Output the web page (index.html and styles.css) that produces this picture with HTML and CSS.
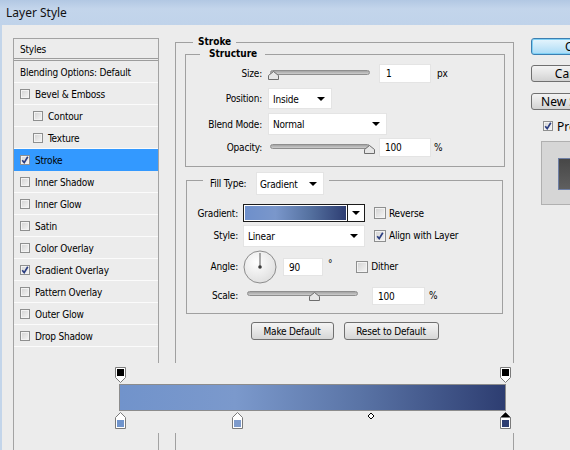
FILE: index.html
```html
<!DOCTYPE html>
<html>
<head>
<meta charset="utf-8">
<title>Layer Style</title>
<link rel="stylesheet" href="styles.css">
</head>
<body>
<div class="win">
  <div class="titlebar">Layer Style</div>
  <div class="client">
    <div class="side">
      <div class="side-head">Styles</div>
      <div class="item">Blending Options: Default</div>
      <div class="item"><span class="cb"></span>Bevel &amp; Emboss</div>
      <div class="item sub"><span class="cb"></span>Contour</div>
      <div class="item sub"><span class="cb"></span>Texture</div>
      <div class="item sel"><span class="cb"><svg viewBox="0 0 8 8" class="tick"><path d="M1.2 4.2 L3.2 6.6 L6.8 0.8"/></svg></span>Stroke</div>
      <div class="item"><span class="cb"></span>Inner Shadow</div>
      <div class="item"><span class="cb"></span>Inner Glow</div>
      <div class="item"><span class="cb"></span>Satin</div>
      <div class="item"><span class="cb"></span>Color Overlay</div>
      <div class="item"><span class="cb"><svg viewBox="0 0 8 8" class="tick"><path d="M1.2 4.2 L3.2 6.6 L6.8 0.8"/></svg></span>Gradient Overlay</div>
      <div class="item"><span class="cb"></span>Pattern Overlay</div>
      <div class="item"><span class="cb"></span>Outer Glow</div>
      <div class="item"><span class="cb"></span>Drop Shadow</div>
    </div>

    <div class="main">
      <fieldset class="grp outer">
        <legend>Stroke</legend>

        <fieldset class="grp struct">
          <legend>Structure</legend>
          <div class="row h23">
            <span class="lbl">Size:</span>
            <span class="slider w100 pad2"><svg class="thumb at-start" viewBox="0 0 11 9"><path d="M5.5 0.5 L10.5 4.5 L10.5 8.5 L0.5 8.5 L0.5 4.5 Z"/></svg></span>
            <span class="field w52 ml9">1</span>
            <span class="unit">px</span>
          </div>
          <div class="row h27">
            <span class="lbl">Position:</span>
            <span class="select w64">Inside<i class="arr"></i></span>
          </div>
          <div class="row h24">
            <span class="lbl">Blend Mode:</span>
            <span class="select w119 tall">Normal<i class="arr"></i></span>
          </div>
          <div class="row h23">
            <span class="lbl">Opacity:</span>
            <span class="slider w100 pad2"><svg class="thumb at-end" viewBox="0 0 11 9"><path d="M5.5 0.5 L10.5 4.5 L10.5 8.5 L0.5 8.5 L0.5 4.5 Z"/></svg></span>
            <span class="field w52 ml9 p5">100</span>
            <span class="unit pct">%</span>
          </div>
        </fieldset>

        <fieldset class="grp fill">
          <legend><span class="fill-lbl">Fill Type:</span><span class="select w68 legend-sel">Gradient<i class="arr"></i></span></legend>
          <div class="row h22">
            <span class="lbl2">Gradient:</span>
            <span class="swatch"><span class="swatch-grad"></span><span class="swatch-btn"><i class="arr"></i></span></span>
            <span class="cb big ml9"></span><span class="cbl">Reverse</span>
          </div>
          <div class="row h23">
            <span class="lbl2">Style:</span>
            <span class="select w122 tall">Linear<i class="arr"></i></span>
            <span class="cb big ml9"><svg viewBox="0 0 8 8" class="tick"><path d="M1.2 4.2 L3.2 6.6 L6.8 0.8"/></svg></span><span class="cbl">Align with Layer</span>
          </div>
          <div class="row h39">
            <span class="lbl2">Angle:</span>
            <svg class="dial" viewBox="0 0 34 34">
              <defs>
                <radialGradient id="dg" cx="0.4" cy="0.35" r="0.7">
                  <stop offset="0" stop-color="#ffffff"/>
                  <stop offset="1" stop-color="#dedede"/>
                </radialGradient>
              </defs>
              <circle cx="17" cy="17" r="16" fill="url(#dg)" stroke="#8c8c8c"/>
              <line x1="17" y1="17" x2="17" y2="3" stroke="#5a5a5a" stroke-width="1"/>
              <circle cx="17" cy="17" r="1.8" fill="#3c3c3c"/>
            </svg>
            <span class="field w40 angle">90</span>
            <span class="deg">°</span>
            <span class="cb big dither"></span><span class="cbl">Dither</span>
          </div>
          <div class="row h19">
            <span class="lbl2">Scale:</span>
            <span class="slider w111 scale"><svg class="thumb at-mid" viewBox="0 0 11 9"><path d="M5.5 0.5 L10.5 4.5 L10.5 8.5 L0.5 8.5 L0.5 4.5 Z"/></svg></span>
            <span class="field w53 ml14 p5 short">100</span>
            <span class="unit pct2">%</span>
          </div>
        </fieldset>

        <div class="btns">
          <span class="btn w83">Make Default</span>
          <span class="btn w95">Reset to Default</span>
        </div>
      </fieldset>
    </div>

    <div class="actions">
      <span class="abtn ok">OK</span>
      <span class="abtn gap10">Cancel</span>
      <span class="abtn gap11">New Style...</span>
      <div class="preview-row"><span class="cb"><svg viewBox="0 0 8 8" class="tick"><path d="M1.2 4.2 L3.2 6.6 L6.8 0.8"/></svg></span><span class="cbl">Preview</span></div>
      <div class="preview-box"><div class="preview-inner"></div></div>
    </div>
  </div>

  <div class="gedit">
    <svg width="470" height="70" viewBox="0 0 470 70">
      <defs>
        <linearGradient id="bar" x1="0" y1="0" x2="1" y2="0">
          <stop offset="0" stop-color="#7193cb"/>
          <stop offset="0.3" stop-color="#7b99cc"/>
          <stop offset="0.62" stop-color="#5a74a6"/>
          <stop offset="1" stop-color="#2d3d71"/>
        </linearGradient>
      </defs>
      <rect x="59.5" y="21.5" width="386" height="26" fill="url(#bar)" stroke="#8c8c8c"/>
      <!-- opacity stops -->
      <path d="M55.5 4.5 H65.5 V14.5 L60.5 19.5 L55.5 14.5 Z" fill="#ffffff" stroke="#7a7a7a"/>
      <rect x="57" y="6" width="7" height="7" fill="#000"/>
      <path d="M440.5 4.5 H450.5 V14.5 L445.5 19.5 L440.5 14.5 Z" fill="#ffffff" stroke="#7a7a7a"/>
      <rect x="442" y="6" width="7" height="7" fill="#000"/>
      <!-- color stops -->
      <path d="M60.5 49.5 L65.5 54.5 V65.5 H55.5 V54.5 Z" fill="#ffffff" stroke="#7a7a7a"/>
      <rect x="57" y="57" width="7" height="7" fill="#7094cc"/>
      <path d="M177.5 49.5 L182.5 54.5 V65.5 H172.5 V54.5 Z" fill="#ffffff" stroke="#7a7a7a"/>
      <rect x="174" y="57" width="7" height="7" fill="#7e9bcc"/>
      <path d="M445.5 49.5 L450.5 54.5 V65.5 H440.5 V54.5 Z" fill="#ffffff" stroke="#7a7a7a"/>
      <path d="M445.5 49.5 L450.5 54.5 H440.5 Z" fill="#000"/>
      <rect x="442" y="57" width="7" height="7" fill="#2e3e72"/>
      <!-- midpoint -->
      <path d="M311 50 L314 53 L311 56 L308 53 Z" fill="#ffffff" stroke="#000"/>
    </svg>
  </div>
</div>
</body>
</html>
```

FILE: styles.css
```css
* { box-sizing: border-box; }
html, body { margin: 0; padding: 0; }
body {
  width: 570px;
  height: 450px;
  overflow: hidden;
  background: #ececec;
  font-family: "DejaVu Sans Condensed", "DejaVu Sans", "Liberation Sans", sans-serif;
  font-size: 10px;
  letter-spacing: -0.2px;
  color: #000;
}
.win { position: relative; width: 570px; height: 450px; }

.titlebar {
  height: 25px;
  padding-left: 6px;
  line-height: 26px;
  font-family: "Noto Sans", "Liberation Sans", sans-serif;
  font-size: 12px;
  letter-spacing: 0;
  color: #111;
  background: linear-gradient(#b2c8e3, #c3d5eb 35%, #c0d3ea);
}

.client {
  display: flex;
  align-items: flex-start;
  height: 425px;
  border-left: 2px solid #c3d5ea;
}

/* left style list */
.side {
  flex: none;
  width: 146px;
  height: 420px;
  margin: 13px 0 0 11px;
  border: 1px solid #a3a3a3;
  border-bottom: none;
}
.side-head {
  height: 22px;
  padding-left: 6px;
  line-height: 21px;
  border-bottom: 3px double #9c9c9c;
}
.item {
  height: 22px;
  display: flex;
  align-items: center;
  padding: 2px 0 0 6px;
  border-bottom: 1px solid #fbfbfb;
  white-space: nowrap;
}
.item.sub { padding-left: 19px; }
.item.sel { background: #3399ff; border-bottom-color: #3399ff; }
.item .cb { margin-right: 5px; margin-top: -2px; }

/* checkbox */
.cb {
  flex: none;
  display: inline-flex;
  align-items: center;
  justify-content: center;
  width: 10px;
  height: 10px;
  border: 1px solid #8e8f8f;
  background: linear-gradient(135deg, #d2d2d2, #f6f6f6);
  box-shadow: inset 0 0 0 1px #f3f3f3;
}
.cb.big { width: 12px; height: 12px; }
.tick { width: 8px; height: 8px; display: block; }
.tick path { fill: none; stroke: #2a3d80; stroke-width: 1.7; }
.cbl { margin-left: 3px; white-space: nowrap; }
.ml9 { margin-left: 9px; }
.ml14 { margin-left: 14px; }

/* main column */
.main {
  flex: none;
  width: 339px;
  margin: 11px 0 0 16px;
}
.grp {
  margin: 0;
  padding: 0;
  min-width: 0;
  border: 1px solid #a0a0a0;
}
.grp > legend {
  font-weight: bold;
  letter-spacing: 0;
  line-height: 12px;
  padding: 0 5px;
  margin-left: 17px;
}
.outer { height: 430px; }

.struct {
  margin: 0 8px 0 9px;
  padding: 2px 0 7px 0;
}
.struct > legend { margin-left: 14px; padding: 0 8px 0 9px; }

.row { display: flex; align-items: center; white-space: nowrap; }
.h19 { height: 19px; }
.h22 { height: 22px; }
.h23 { height: 23px; }
.h24 { height: 24px; }
.h27 { height: 27px; }
.h39 { height: 39px; }

.lbl { flex: none; width: 76px; text-align: right; margin-right: 6px; }
.lbl2 { flex: none; width: 51px; text-align: right; margin-right: 5px; }

.field {
  flex: none;
  height: 19px;
  line-height: 18px;
  padding-left: 6px;
  background: #fff;
  border: 1px solid #e4e4e4;
}
.field.p5 { padding-left: 5px; }
.field.short { height: 18px; line-height: 17px; }
.w40 { width: 40px; }
.w52 { width: 52px; }
.w53 { width: 53px; }
.unit { margin-left: 6px; }
.unit.pct { margin-left: 3px; }
.unit.pct2 { margin-left: 4px; }

/* slider */
.slider {
  position: relative;
  flex: none;
  height: 5px;
  margin-bottom: 2px;
  border-radius: 3px;
  border: 1px solid #8e8e8e;
  background: linear-gradient(#a3a3a3, #cdcdcd);
}
.slider.pad2 { margin-left: 2px; }
.slider.scale { margin-left: 4px; margin-bottom: 4px; }
.w100 { width: 100px; }
.w111 { width: 111px; }
.thumb {
  position: absolute;
  top: 0;
  width: 11px;
  height: 9px;
}
.thumb path { fill: #e6e6e6; stroke: #6d6d6d; stroke-width: 1; }
.at-start { left: -3px; }
.at-end { right: -6px; }
.at-mid { left: 61px; }

/* select */
.select {
  flex: none;
  display: flex;
  align-items: center;
  justify-content: space-between;
  height: 21px;
  padding: 1px 6px 0 4px;
  background: #fff;
  border: 1px solid #e4e4e4;
}
.select.tall { height: 22px; }
.select .arr { margin-top: -1px; }
.w64 { width: 64px; }
.w68 { width: 68px; }
.w119 { width: 119px; }
.w122 { width: 122px; }
.arr {
  display: block;
  width: 0;
  height: 0;
  border-left: 4px solid transparent;
  border-right: 4px solid transparent;
  border-top: 4px solid #000;
}

/* fill type */
.fill {
  margin: -2px 10px 0 10px;
  padding: 7px 0 8px 0;
}
.fill > legend {
  display: flex;
  align-items: center;
  font-weight: normal;
  letter-spacing: -0.2px;
  line-height: normal;
  margin-left: 16px;
  padding: 7px 5px 0 7px;
}
.fill-lbl { flex: none; width: 42px; margin-right: 4px; }
.legend-sel { height: 23px; padding-left: 3px; }

.swatch {
  flex: none;
  display: flex;
  width: 122px;
  height: 18px;
  border: 1px solid #1b1b1b;
  background: #fff;
}
.swatch-grad {
  flex: 1;
  margin: 1px;
  background: linear-gradient(90deg, #6e8fcb, #7a97cb 30%, #54709f 65%, #2e3e73);
}
.swatch-btn {
  flex: none;
  width: 17px;
  display: flex;
  align-items: center;
  justify-content: center;
  border-left: 1px solid #1b1b1b;
}

.dial { flex: none; width: 34px; height: 34px; margin-left: 0; }
.angle { height: 18px; line-height: 17px; margin-left: 6px; padding-left: 5px; }
.deg { align-self: flex-start; margin-top: 11px; margin-left: 5px; }
.dither { margin-left: 24px; }

.btns {
  display: flex;
  justify-content: center;
  gap: 10px;
  margin-top: 8px;
}
.btn {
  flex: none;
  height: 18px;
  line-height: 17px;
  text-align: center;
  border: 1px solid #707070;
  border-radius: 3px;
  background: linear-gradient(#f4f4f4, #e6e6e6 50%, #d6d6d6);
}
.w83 { width: 83px; }
.w95 { width: 95px; }

/* right actions */
.actions {
  flex: none;
  width: 90px;
  margin: 13px 0 0 16px;
}
.abtn {
  display: block;
  width: 82px;
  height: 17px;
  line-height: 15px;
  margin-left: 1px;
  padding-left: 3px;
  text-align: center;
  font-family: "Noto Sans", "Liberation Sans", sans-serif;
  font-size: 12px;
  letter-spacing: 0;
  border: 1px solid #707070;
  border-radius: 3px;
  background: linear-gradient(#f3f3f3, #e4e4e4 50%, #d2d2d2);
  white-space: nowrap;
}
.abtn.ok {
  border-color: #3c7fb1;
  background: linear-gradient(#e6f5fd, #c9e8f9 50%, #a9dbf6);
  box-shadow: inset 0 0 0 1px #7fd0f5;
}
.gap10 { margin-top: 10px; }
.gap11 { margin-top: 11px; }
.preview-row {
  display: flex;
  align-items: center;
  height: 10px;
  margin-top: 11px;
  padding-left: 13px;
  font-family: "Noto Sans", "Liberation Sans", sans-serif;
  font-size: 12px;
  letter-spacing: 0;
}
.preview-row .cbl { margin-left: 4px; }
.preview-box {
  width: 64px;
  height: 64px;
  margin: 10px 0 0 11px;
  padding: 16px 0 0 16px;
  background: #d6d6d6;
  border: 1px solid #b0b0b0;
}
.preview-inner {
  width: 32px;
  height: 32px;
  background: linear-gradient(#474747, #5f5f5f);
  border: 1px solid #6e7fa5;
}

/* gradient editor strip (overlays the dialog) */
.gedit {
  position: absolute;
  left: 60px;
  top: 363px;
  width: 470px;
  height: 70px;
  background: #ececec;
}
.gedit svg { display: block; }
```
